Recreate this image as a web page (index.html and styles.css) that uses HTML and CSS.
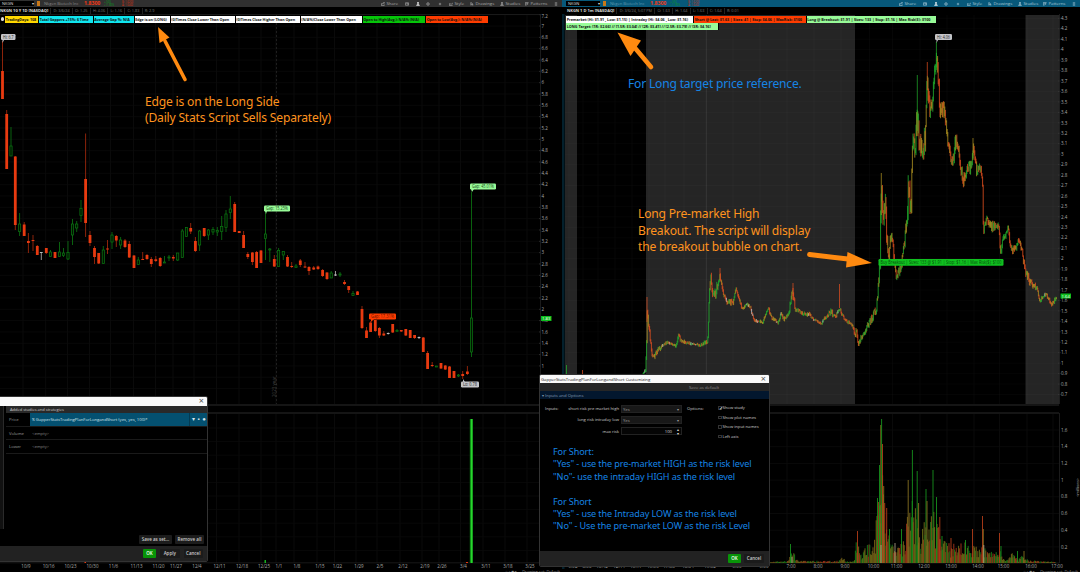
FILE: index.html
```
<!DOCTYPE html>
<html lang="en">
<head>
  <meta charset="UTF-8">
  <meta name="viewport" content="width=device-width, initial-scale=1.0">
  <title>NKGN - Gapper Stats Trading Plan</title>
  <link rel="stylesheet" href="styles.css">
</head>
<body>
  <!-- Toolbar icons -->
  <svg class="defs" width="0" height="0">
    <symbol id="i-share" viewBox="0 0 10 10"><path d="M1 3v6h7V6M3 6c0-3 2-4 5-4M6 0l3 2-3 2"/></symbol>
    <symbol id="i-note" viewBox="0 0 10 10"><path d="M1 2h8v6H1zM5 2v3h4"/></symbol>
    <symbol id="i-flask" viewBox="0 0 10 10"><path d="M3 1h4M4 1v4L1.5 9h7L6 5V1M3 7h4"/></symbol>
    <symbol id="i-gear" viewBox="0 0 10 10"><circle cx="5" cy="5" r="2.6"/><path d="M5 0v2M5 8v2M0 5h2M8 5h2"/></symbol>
    <symbol id="i-plus" viewBox="0 0 10 10"><path d="M5 2v6M2 5h6"/></symbol>
    <symbol id="i-style" viewBox="0 0 10 10"><path d="M1 3v6h8M3 6l2-2 2 2 2-4"/></symbol>
    <symbol id="i-cursor" viewBox="0 0 10 10"><path d="M2 1l6 5H5l2 3M2 1v7l3-2"/></symbol>
    <symbol id="i-pattern" viewBox="0 0 10 10"><path d="M1 9V1h8M3 4h5M3 8l2-2 3-1"/></symbol>
    <symbol id="i-list" viewBox="0 0 10 10"><path d="M2 2h6M2 5h6M2 8h6"/></symbol>
  </svg>

  <div class="workspace">
    <!-- Daily chart -->
    <section class="panel daily">
      <div class="toolbar">
        <span class="symbol-box">NKGN <i>▾</i></span>
        <span class="link-badge"></span>
        <span class="company">Nkgen Biotech Inc</span>
        <span class="last">1.8300</span>
        <span class="change up">+.560<br>+11.80%</span>
        <span class="change down">B: 1.6200<br>A: 1.6400</span>
        <div class="tools">
          <span class="tool w-share"><svg><use href="#i-share"/></svg>Share</span>
          <span class="tool w-icon"><svg><use href="#i-note"/></svg></span>
          <span class="tool w-icon flask"><svg><use href="#i-flask"/></svg></span>
          <span class="tool w-icon2"><svg><use href="#i-gear"/></svg></span>
          <span class="tool w-icon2"><svg><use href="#i-plus"/></svg></span>
          <span class="tool w-style"><svg><use href="#i-style"/></svg>Style</span>
          <span class="tool w-draw"><svg><use href="#i-cursor"/></svg>Drawings</span>
          <span class="tool w-studies"><svg><use href="#i-flask"/></svg>Studies</span>
          <span class="tool w-patterns"><svg><use href="#i-pattern"/></svg>Patterns</span>
          <span class="tool w-last"><svg><use href="#i-list"/></svg></span>
        </div>
      </div>
      <div class="quote">
        <b>NKGN 10 Y 1D [NASDAQ]</b>
        <span>D: 3/6/24</span><span>O: 1.25</span><span>H: 4.06</span><span>L: 1.16</span><span>C: 1.83</span><span>R: 2.9</span>
      </div>
      <svg class="chart" id="dailyChart" viewBox="0 14 562 555"></svg>
      <div class="status"><span>⌂ ▫ ◉ ▸</span><span>Drawing set: Default</span></div>
      <div class="labels">
        <span class="marker"></span>
        <span class="label yellow" style="width:34px">TradingDays: 108</span>
        <span class="label cyan" style="width:54.5px">Total Gappers +15%: 6 Time</span>
        <span class="label cyan" style="width:41px">Average Gap %: N/A</span>
        <span class="label white" style="width:36px">Edge is on (LONG)</span>
        <span class="label white" style="width:65px">(0)Times Close Lower Than Open</span>
        <span class="label white" style="width:65px">(0)Times Close Higher Than Open</span>
        <span class="label white" style="width:62px">(N/A%)Close Lower Than Open</span>
        <span class="label green" style="width:63.5px">Open to High(Avg.): N/A% (N/A)</span>
        <span class="label red" style="width:62.5px">Open to Low(Avg.): N/A% (N/A)</span>
      </div>
    </section>

    <!-- Intraday chart -->
    <section class="panel intraday">
      <div class="toolbar">
        <span class="symbol-box">NKGN <i>▾</i></span>
        <span class="link-badge"></span>
        <span class="company">Nkgen Biotech Inc</span>
        <span class="last">1.8300</span>
        <span class="change up">+.560<br>+11.80%</span>
        <span class="change down">B: 1.6200<br>A: 1.6400</span>
        <div class="tools">
          <span class="tool w-share"><svg><use href="#i-share"/></svg>Share</span>
          <span class="tool w-icon"><svg><use href="#i-note"/></svg></span>
          <span class="tool w-icon flask"><svg><use href="#i-flask"/></svg></span>
          <span class="tool w-icon2"><svg><use href="#i-gear"/></svg></span>
          <span class="tool w-icon2"><svg><use href="#i-plus"/></svg></span>
          <span class="tool w-style"><svg><use href="#i-style"/></svg>Style</span>
          <span class="tool w-draw"><svg><use href="#i-cursor"/></svg>Drawings</span>
          <span class="tool w-studies"><svg><use href="#i-flask"/></svg>Studies</span>
          <span class="tool w-patterns"><svg><use href="#i-pattern"/></svg>Patterns</span>
          <span class="tool w-last"><svg><use href="#i-list"/></svg></span>
        </div>
      </div>
      <div class="quote">
        <b>NKGN 1 D 1m [NASDAQ]</b>
        <span>D: 3/6/24, 5:07 PM</span><span>O: 1.63</span><span>H: 1.64</span><span>L: 1.63</span><span>C: 1.64</span><span>R: 0.01</span>
      </div>
      <svg class="chart" id="intradayChart" viewBox="562 14 518 555"></svg>
      <div class="status"><span>⌂ ▫ ◉ ▸</span><span>Drawing set: Default</span></div>
      <div class="labels">
        <span class="label white" style="width:128px">Premarket (Hi: $1.91 , Low: $1.15) | Intraday (Hi: $4.06 , Low: $1.16)</span>
        <span class="label red" style="width:112.5px">Short @ Last: $1.63 | Sizes: 41 | Stop: $4.06 | MaxRisk: $100</span>
        <span class="label lime" style="width:130.5px">Long @ Breakout: $1.91 | Sizes: 133 | Stop: $1.16 | Max Risk($): $100</span>
        <span class="label lime" style="width:153px">LONG Target: [1R: $2.66] // [1.5R: $3.04] // [2R: $3.41] // [2.5R: $3.79] // [3R: $4.16]</span>
      </div>
    </section>
  </div>

  <!-- Edit studies dialog -->
  <div class="dialog studies">
    <div class="dialog-title"><span></span><span class="close">×</span></div>
    <div class="studies-body">
      <div class="study-side"></div>
      <div class="study-list">
        <div class="study-head">Added studies and strategies</div>
        <div class="study-row selected"><span class="name">Price</span><span class="value">℁ GapperStatsTradingPlanForLongandShort (yes, yes, 100)*</span><span class="row-tools"><i>▾</i><i>▪</i><i>●</i></span></div>
        <div class="study-row"><span class="name">Volume</span><span class="value">&lt;empty&gt;</span></div>
        <div class="study-row"><span class="name">Lower</span><span class="value">&lt;empty&gt;</span></div>
        <div class="set-buttons"><button>Save as set...</button><button>Remove all</button></div>
      </div>
    </div>
    <div class="dialog-footer">
      <button class="ok">OK</button><button>Apply</button><button>Cancel</button>
    </div>
  </div>

  <!-- Customizing dialog -->
  <div class="dialog customizing">
    <div class="dialog-title"><span>GapperStatsTradingPlanForLongandShort Customizing</span><span class="close">×</span></div>
    <div class="default-bar"><span>Save as default</span></div>
    <div class="section-head">▾ Inputs and Options</div>
    <div class="inputs">
      <span class="group">Inputs:</span>
      <div class="fields">
        <label>short risk pre market high <span class="field">Yes<i>▾</i></span></label>
        <label>long risk intraday low <span class="field">Yes<i>▾</i></span></label>
        <label>max risk <span class="field number">100<i class="spin">▴<br>▾</i></span></label>
      </div>
      <span class="group options">Options:</span>
      <div class="checks">
        <span><i>✓</i>Show study</span>
        <span><i></i>Show plot names</span>
        <span><i></i>Show input names</span>
        <span><i></i>Left axis</span>
      </div>
    </div>
    <div class="help">
      <p>For Short:</p>
      <p>"Yes" - use the pre-market HIGH as the risk level</p>
      <p>"No"- use the intraday HIGH as the risk level</p>
      <p>&nbsp;</p>
      <p>For Short</p>
      <p>"Yes" - use the Intraday LOW as the risk level</p>
      <p>"No" - Use the pre-market LOW as the risk Level</p>
    </div>
    <div class="dialog-footer">
      <button class="ok">OK</button><button>Cancel</button>
    </div>
  </div>

  <!-- Callouts over the charts -->
  <div class="note note-edge">Edge is on the Long Side<br>(Daily Stats Script Sells Separately)</div>
  <div class="note note-target">For Long target price reference.</div>
  <div class="note note-breakout">Long Pre-market High<br>Breakout. The script will display<br>the breakout bubble on chart.</div>
  <svg class="arrows" viewBox="0 0 1080 572">
    <path class="shaft" stroke-width="3.6" d="M185 79.5L165 41"/>
    <path class="head" d="M158 27L169.5 37.5L159.5 43Z"/>
    <path class="shaft" stroke-width="4.6" d="M651 67L635 48"/>
    <path class="head" d="M617.5 32.5L641 40.5L630.5 56Z"/>
    <path class="shaft" stroke-width="4.8" d="M809.5 254.5L848 259"/>
    <path class="head" d="M847.5 252L872 263L846 267.5Z"/>
  </svg>

  <script src="chart.js"></script>
</body>
</html>
```
FILE: styles.css
```
* {
  box-sizing: border-box;
}

body {
  margin: 0;
  width: 1080px;
  height: 572px;
  position: relative;
  overflow: hidden;
  background-color: #000;
  color: #bbb;
  font-family: "Open Sans", "Noto Sans", sans-serif;
  font-size: 4.5px;
}

i {
  font-style: normal;
}

.defs {
  position: absolute;
}

.workspace {
  display: grid;
  grid-template-columns: 562px 518px;
  height: 572px;
}

.panel {
  display: flex;
  flex-direction: column;
  position: relative;
  min-width: 0;
  overflow: hidden;
}

/* Toolbar */
.toolbar {
  display: flex;
  align-items: center;
  height: 7px;
  flex: none;
  background-color: #303030;
  white-space: nowrap;
  line-height: 7px;
}

.intraday .toolbar {
  background-color: #07587a;
  padding-left: 4px;
}

.symbol-box {
  display: flex;
  justify-content: space-between;
  width: 34px;
  height: 5px;
  line-height: 5px;
  padding-left: 2px;
  background-color: #000;
  color: #ddd;
  font-size: 4px;
}

.link-badge {
  width: 3px;
  height: 5px;
  margin: 0 4px 0 3px;
  background-color: #c87818;
}

.company {
  width: 40px;
  color: #888;
  font-size: 4.1px;
}

.last {
  width: 20px;
  color: #f03818;
  font-size: 5.2px;
  font-weight: bold;
}

.change {
  width: 18px;
  font-size: 2.6px;
  line-height: 3px;
}

.up { color: #0a9c20; }
.down { color: #d83010; }

.intraday .company { color: #5f98b0; }

.tools {
  display: flex;
  margin-left: auto;
}

.tool {
  display: flex;
  align-items: center;
  gap: 1.5px;
  height: 7px;
  color: #aaa;
  font-size: 4.3px;
}

.intraday .tool { color: #a9c8d6; }

.tool svg {
  width: 4px;
  height: 4px;
  fill: none;
  stroke: currentColor;
  stroke-width: 1.6;
}

.w-share { width: 22px; }
.w-icon { width: 11px; padding-left: 2px; }
.w-icon2 { width: 12px; padding-left: 1px; }
.w-style { width: 21px; }
.w-draw { width: 30px; }
.w-studies { width: 25px; }
.w-patterns { width: 29px; }
.w-last { width: 8px; }
.tools .flask { color: #fff; }

/* Quote line */
.quote {
  display: flex;
  flex: none;
  align-items: center;
  height: 7px;
  padding-top: 1px;
  color: #777;
  font-size: 3.8px;
  line-height: 6px;
  white-space: nowrap;
}

.quote b {
  color: #ddd;
  font-size: 4px;
  padding-right: 2px;
}

.quote span {
  padding: 0 2.2px;
  border-left: 1px solid #222;
}

.intraday .quote { padding-left: 5px; }

.chart {
  display: block;
  width: 100%;
  height: 555px;
  flex: none;
}

.chart text {
  font-size: 4.5px;
  fill: #aaa;
}

.status {
  display: flex;
  justify-content: flex-end;
  gap: 5px;
  height: 3px;
  padding-right: 2px;
  overflow: hidden;
  line-height: 5px;
  color: #999;
  font-size: 4px;
}

/* Study labels over the chart */
.labels {
  position: absolute;
  top: 15.5px;
  left: 1px;
  right: 60px;
  display: flex;
  flex-wrap: wrap;
}

.intraday .labels {
  left: 4px;
  right: 140px;
  row-gap: 0.3px;
}

.marker {
  width: 3px;
  height: 4px;
  margin: 1px 1px 0 0;
  border-radius: 2px;
  background-color: #ddd;
}

.label {
  height: 7.3px;
  padding-left: 0.7px;
  border-right: 0.5px solid #000;
  overflow: hidden;
  color: #111;
  font-size: 3.75px;
  font-weight: bold;
  letter-spacing: -0.03px;
  line-height: 7px;
  white-space: nowrap;
}

.daily .label { font-size: 3.7px; letter-spacing: -0.05px; }

.yellow { background-color: #ffd800; }
.cyan { background-color: #10e5ee; }
.white { background-color: #fff; }
.green { background-color: #06c60a; }
.red { background-color: #ff3c00; }
.lime { background-color: #98fb98; }

/* Dialogs */
.dialog {
  position: absolute;
  display: flex;
  flex-direction: column;
  background-color: #000;
  border: 0.5px solid #333;
  border-radius: 2px;
  overflow: hidden;
}

.dialog-title {
  display: flex;
  flex: none;
  justify-content: space-between;
  align-items: center;
  height: 8.5px;
  padding: 0 3px 0 1px;
  background-color: #fafafa;
  color: #222;
  font-size: 4.3px;
}

.close {
  color: #555;
  font-size: 9px;
  line-height: 8px;
}

.dialog button {
  height: 9px;
  padding: 0;
  border: 0;
  border-radius: 1px;
  background-color: #1c1c1c;
  color: #ccc;
  font-family: inherit;
  font-size: 4.5px;
  font-weight: 600;
  line-height: 9px;
}

.dialog-footer {
  display: flex;
  flex: none;
  align-items: center;
  justify-content: flex-end;
  height: 15px;
  background-color: #222;
}

.dialog .dialog-footer button { background-color: #1b1b1b; }

.dialog .dialog-footer .ok {
  width: 13px;
  background-color: #089408;
  color: #fff;
}

.studies {
  left: -2px;
  top: 396px;
  width: 210px;
  height: 166px;
}

.studies-body {
  display: flex;
  flex: 1;
}

.study-side {
  width: 5px;
  margin: 0 2px 17px 0;
  background-color: #111;
  border-right: 1px solid #2a2a2a;
}

.study-list {
  display: flex;
  flex: 1;
  flex-direction: column;
}

.study-head {
  height: 7.5px;
  padding-left: 4px;
  background-color: #292929;
  color: #ccc;
  line-height: 7px;
  font-size: 4px;
}

.study-row {
  display: flex;
  align-items: center;
  height: 13.7px;
  padding-left: 3px;
  border-bottom: 1px solid #1a1a1a;
  font-size: 4.2px;
}

.name { width: 21px; color: #999; }

.value {
  flex: 1;
  height: 100%;
  padding-left: 2px;
  color: #888;
  line-height: 13px;
  white-space: nowrap;
}

.selected .value,
.selected .row-tools {
  background-color: #045070;
  color: #d5e5eb;
}

.row-tools {
  display: flex;
  justify-content: space-between;
  width: 18px;
  height: 100%;
  padding: 0 1px 0 2px;
  line-height: 13px;
  border-left: 1px solid #033a52;
  font-size: 6px;
}

.set-buttons {
  display: flex;
  gap: 3px;
  justify-content: flex-end;
  margin: auto 3px 2px 0;
}

.set-buttons button:first-child { width: 33px; }
.set-buttons button:last-child { width: 29px; }

.studies .dialog-footer {
  gap: 4px;
  padding-right: 4px;
}

.studies .dialog-footer button:not(.ok) { width: 19.5px; }

.customizing {
  left: 539px;
  top: 373.5px;
  width: 231px;
  height: 193px;
}

.default-bar {
  height: 8px;
  flex: none;
  padding-left: 149px;
  background-color: #262626;
  color: #888;
  line-height: 8px;
  font-size: 4.3px;
}

.section-head {
  flex: none;
  height: 8px;
  padding-left: 2px;
  background-color: #03172e;
  color: #8298ae;
  line-height: 8px;
  font-size: 4.3px;
}

.inputs {
  display: flex;
  flex: none;
  height: 49px;
  padding: 4px 0 0 5px;
  color: #ccc;
  font-size: 4.2px;
}

.group {
  width: 16px;
  padding-top: 3px;
}

.fields {
  width: 121px;
}

.fields label {
  display: flex;
  align-items: center;
  justify-content: flex-end;
  gap: 2px;
  height: 11.3px;
}

.field {
  display: flex;
  justify-content: space-between;
  width: 61px;
  height: 8px;
  padding: 0 2px 0 1px;
  border: 0.5px solid #222;
  background-color: #181818;
  color: #999;
  line-height: 7px;
}

.number {
  justify-content: flex-end;
  gap: 5px;
  background-color: #050505;
  color: #ddd;
}

.spin { font-size: 4px; line-height: 3.5px; }
.options { width: 36px; padding-left: 5px; }

.checks {
  display: flex;
  flex-direction: column;
}

.checks span {
  display: flex;
  align-items: center;
  height: 9.5px;
}

.checks i {
  width: 3.5px;
  height: 3.5px;
  margin-right: 1px;
  border: 0.5px solid #333;
  color: #fff;
  font-size: 5px;
  line-height: 3px;
}

.help {
  flex: 1;
  margin-top: -2px;
  padding-left: 13px;
  color: #1684e4;
  font-family: "Noto Sans", sans-serif;
  font-size: 9.1px;
  letter-spacing: -0.12px;
}

.help p {
  margin: 0;
  line-height: 12.4px;
  white-space: nowrap;
}

.customizing .dialog-footer {
  gap: 3px;
  padding-right: 5px;
}

.customizing .dialog-footer button:last-child { width: 20px; }

/* Callouts */
.note {
  position: absolute;
  color: #ff931e;
  font-family: "Noto Sans", sans-serif;
  font-size: 12.1px;
  letter-spacing: -0.2px;
  line-height: 16.6px;
  white-space: nowrap;
}

.note-edge { left: 145px; top: 93.5px; }
.note-target { left: 628px; top: 75.5px; color: #1684e4; }
.note-breakout { left: 638px; top: 206px; }

.arrows {
  position: absolute;
  inset: 0;
  width: 1080px;
  height: 572px;
}

.shaft {
  stroke: #ff8a10;
  stroke-linecap: round;
}

.head { fill: #ff8a10; }
```
FILE: chart.js
```
const SVG_NS = 'http://www.w3.org/2000/svg';
const daily = document.getElementById('dailyChart');
const intraday = document.getElementById('intradayChart');

function add(parent, name, attrs, text) {
  const el = document.createElementNS(SVG_NS, name);
  for (const key in attrs) el.setAttribute(key, attrs[key]);
  if (text !== undefined) el.textContent = text;
  parent.appendChild(el);
  return el;
}

function rect(parent, x, y, width, height, fill) {
  add(parent, 'rect', { x, y, width, height, fill });
}

function vline(parent, x, y1, y2, stroke, w) {
  add(parent, 'line', { x1: x, x2: x, y1, y2, stroke, 'stroke-width': w || 1 });
}

function hline(parent, x1, x2, y, stroke, w) {
  add(parent, 'line', { x1, x2, y1: y, y2: y, stroke, 'stroke-width': w || 1 });
}

function bubble(parent, x, y, w, h, fill, text, color, size) {
  add(parent, 'rect', { x, y, width: w, height: h, rx: 1.2, fill });
  add(parent, 'text', {
    x: x + 2, y: y + h / 2 + 1.6, textLength: w - 4, lengthAdjust: 'spacingAndGlyphs',
    style: `fill:${color};font-size:${size || 4.4}px`
  }, text);
}

// fixed seed so the bars look the same on every load
let seed = 7;
function rnd() {
  seed = (seed * 16807) % 2147483647;
  return seed / 2147483647;
}

/* ---------- Daily chart ---------- */
const weeks = [['10/9', 26], ['10/16', 48.7], ['10/23', 70.5], ['10/30', 92.5], ['11/6', 113.5],
  ['11/13', 136.5], ['11/20', 158.5], ['11/27', 176], ['12/4', 197], ['12/11', 219.5], ['12/18', 242],
  ['12/25', 264], ['1/1', 279], ['1/8', 297], ['1/15', 320], ['1/22', 337.5], ['1/29', 359], ['2/5', 380],
  ['2/12', 403], ['2/19', 425], ['2/26', 442], ['3/4', 463.5], ['3/11', 486], ['3/18', 508], ['3/25', 530]];

weeks.forEach(([name, x]) => {
  vline(daily, x - 3, 15, 404, '#0c0c0c', 0.8);
  vline(daily, x - 3, 414, 563, '#0c0c0c', 0.8);
  add(daily, 'text', { x, y: 568, 'text-anchor': 'middle' }, name);
});

for (let i = 0; i < 34; i++) {
  const y = 14.7 + i * 11.33;
  hline(daily, 0, 540, y, '#0c0c0c', 0.7);
  hline(daily, 539, 541, y, '#444', 0.6);
  if (i < 32) add(daily, 'text', { x: 541.5, y: y + (i ? 1.7 : 3) }, String(+(7.2 - i * 0.2).toFixed(1)));
}
for (let y = 428; y < 560; y += 13.6) hline(daily, 0, 540, y, '#0c0c0c', 0.7);

vline(daily, 540.5, 14, 404, '#222', 0.8);
vline(daily, 540.5, 413, 563, '#222', 0.8);
hline(daily, 0, 540, 14.5, '#222', 0.7);
hline(daily, 0, 540, 405, '#1c1c1c', 1.6);
hline(daily, 0, 540, 413, '#1c1c1c', 1.4);
hline(daily, 0, 540, 562.8, '#222', 0.7);
add(daily, 'line', { x1: 276.5, x2: 276.5, y1: 15, y2: 404, stroke: '#2a2a2a', 'stroke-width': 0.7, 'stroke-dasharray': '2 2' });
add(daily, 'text', { x: 0, y: 0, transform: 'translate(275.5 397) rotate(-90)', style: 'fill:#444' }, '2023 year');

// x, high, open/close top, open/close bottom, low, colour (r, g or w)
const candles = [
  [2.5, 41, 71, 99, 99, 'r'], [6.7, 110, 114, 169, 169, 'r'], [11, 127, 146, 156, 156, 'g'],
  [15.3, 156, 156.5, 225, 230, 'r'], [19.6, 213, 224, 231.5, 236, 'g'], [24.2, 222, 224.5, 236, 236, 'r'],
  [28.4, 233, 241, 243, 253, 'r'], [33, 235, 240, 241, 251, 'r'], [37.3, 245, 246, 255, 255, 'r'],
  [41.3, 252, 252, 253, 260, 'w'], [46.3, 248, 248, 253, 254, 'r'], [50.5, 250, 252, 256.5, 257, 'g'],
  [55, 252, 252, 258, 258, 'r'], [59.5, 242, 252, 256.5, 257, 'g'], [63.5, 248, 253, 255.5, 257, 'g'],
  [68, 241, 252.5, 259, 260, 'g'], [72.5, 219, 224, 235, 245, 'g'], [76.7, 221, 224, 228, 232, 'g'],
  [81, 200, 208.5, 215.5, 222, 'g'], [85.6, 133.5, 179, 223, 237, 'r'], [90, 231, 235, 243, 246, 'r'],
  [94.5, 246, 248, 257, 264, 'r'], [98.7, 253, 253, 263.5, 264, 'r'], [103.3, 246, 250, 263.5, 264, 'g'],
  [107.5, 240, 248.5, 249.5, 254, 'r'], [112, 232, 235, 242, 249, 'g'], [116.3, 235, 236, 240.5, 247, 'r'],
  [120.6, 237, 240, 245, 249, 'g'], [125, 239, 240.5, 247, 248, 'r'], [129.3, 241, 244, 257.5, 258, 'r'],
  [134, 255, 255.5, 268, 268, 'r'], [138.3, 257, 260, 264.5, 265, 'g'], [142.7, 252, 259, 260, 260, 'r'],
  [147, 254, 255, 259, 260, 'r'], [151.3, 257, 259, 264, 267, 'r'], [155.8, 256, 259.3, 261, 262, 'r'],
  [160.2, 257, 258, 266, 267, 'r'], [164.5, 256, 262, 263, 263, 'g'], [169, 255, 257, 258, 261, 'g'],
  [173.3, 255, 257, 258.5, 261, 'r'], [177.7, 253, 253, 260, 261, 'g'], [182.3, 229, 231, 257.5, 258, 'g'],
  [186.5, 227, 227.5, 236.5, 237, 'g'], [190.7, 223, 228, 231.5, 234, 'r'], [195.4, 237, 241, 251, 252, 'r'],
  [199.6, 230, 231, 245, 251, 'g'], [204.2, 228, 228, 236, 237, 'r'], [208.4, 229, 230, 235, 240, 'g'],
  [213, 227, 229.5, 232, 235, 'g'], [217.3, 227, 230.5, 232, 236, 'g'], [221.7, 216, 226.5, 231.5, 240, 'g'],
  [226, 210, 214, 227.5, 232, 'g'], [230.3, 196, 209, 212.5, 219, 'g'], [234.7, 202, 204, 232, 232, 'r'],
  [239.2, 231, 231, 233, 233, 'r'], [243.6, 231, 235, 248, 248, 'r'], [247.8, 252, 254, 257, 259, 'r'],
  [252.4, 252, 252.5, 262, 265, 'r'], [256.6, 251, 252, 268, 268, 'r'], [261, 250, 250.5, 263, 263, 'r'],
  [265.5, 213, 234, 238.5, 260, 'g'], [269.8, 248, 249, 250, 262, 'g'], [274.3, 255, 259, 266.5, 267, 'r'],
  [278.6, 248, 250.5, 266.5, 267, 'g'], [283.3, 251, 251.5, 255, 260, 'g'], [287.5, 255, 257, 266.5, 267, 'r'],
  [291.7, 262, 266, 267, 268, 'r'], [296, 264, 266, 267.5, 268, 'g'], [300.3, 259, 260.5, 265, 267, 'r'],
  [305, 262, 266.5, 267.5, 268, 'r'], [309, 266, 267, 271, 275, 'r'], [313.7, 266, 267.5, 269.5, 270, 'r'],
  [318, 265.5, 266.5, 269, 270, 'r'], [322.6, 269, 270, 276, 277, 'r'], [327, 272, 272.5, 279, 280, 'r'],
  [331.2, 271, 273, 278, 278, 'g'], [335.5, 271, 274.5, 275.5, 276, 'w'], [340, 272, 274, 275, 277, 'g'],
  [344.5, 280, 282, 284, 285, 'r'], [348.7, 286, 286, 290, 293, 'r'], [353, 291, 293.5, 295.5, 296, 'g'],
  [357.5, 291, 291.5, 295, 295, 'r'], [362, 306, 309, 328, 329, 'r'], [366.5, 327, 330.5, 338, 338, 'r'],
  [370.6, 321, 322.5, 332, 332, 'r'], [375.3, 320, 320, 331, 332, 'r'], [379.4, 327, 328, 335.5, 338, 'r'],
  [383.8, 331, 333.5, 335.5, 336, 'r'], [388.2, 332.5, 333, 334, 334.5, 'w'], [392.7, 324, 324, 332.5, 333, 'r'],
  [397, 329, 330.5, 331.5, 332, 'g'], [401.3, 330, 330, 331.5, 332, 'r'], [405.8, 329, 329, 335.5, 336, 'r'],
  [410.2, 330, 330, 338, 338, 'r'], [414.6, 335, 335, 338, 339, 'r'], [419, 336.5, 337, 338, 339, 'w'],
  [423.3, 337, 337.5, 352, 352, 'r'], [427.6, 351, 353, 369, 369, 'r'], [432.2, 362, 365, 366, 367, 'r'],
  [436.5, 366, 366, 367, 367, 'g'], [441, 363, 363, 368.5, 369, 'r'], [445.3, 365, 365.5, 369.5, 370, 'r'],
  [449.5, 366, 366.5, 378, 378, 'r'], [454, 371, 371, 378, 378, 'r'], [458.5, 374, 375, 376, 377, 'g'],
  [462.7, 371, 374, 376, 379, 'r'], [467.4, 366, 371.5, 374, 375, 'r'], [471.5, 192, 318, 352, 357, 'g']
];

candles.forEach(([x, high, top, bottom, low, c]) => {
  const color = { r: '#e83a10', g: '#0b7a12', w: '#bbb' }[c];
  const h = Math.max(1, bottom - top);
  if (c === 'g') {
    vline(daily, x, high, top, color, 0.8);
    vline(daily, x, bottom, low, color, 0.8);
    add(daily, 'rect', { x: x - 1.1, y: top, width: 2.2, height: h, fill: '#001400', stroke: color, 'stroke-width': 0.7 });
  } else {
    vline(daily, x, high, low, c === 'r' ? '#b02c0c' : color, 0.8);
    rect(daily, x - 1.4, top, 2.8, h, color);
  }
});

bubble(daily, 1, 34, 14.5, 6, '#c4c4c8', 'Hi: 6.7', '#222');
bubble(daily, 264, 205.5, 26, 6, '#98fb98', 'Gap: 15.25%', '#164a16');
bubble(daily, 470, 183.5, 26, 6, '#98fb98', 'Gap: 45.01%', '#164a16');
bubble(daily, 369, 313.5, 27, 6, '#ff3c00', 'Gap: 17.31%', '#6a1400');
bubble(daily, 461, 381.5, 18, 6, '#c4c4c8', 'Lo: 0.78', '#222');
add(daily, 'path', { d: 'M471 189l1 3 2-3zM265 211l1 3 1-3z', fill: '#98fb98' });
add(daily, 'path', { d: 'M371 322l0-3 3 0z', fill: '#ff3c00' });
add(daily, 'path', { d: 'M2.5 39l0 4 2-4zM463 382l0-3 2 3z', fill: '#c4c4c8' });
rect(daily, 541, 316, 10.5, 5, '#0dbd1d');
add(daily, 'text', { x: 542, y: 320.2, style: 'fill:#fff;font-size:4.2px' }, '1.83');

rect(daily, 469.8, 419, 3.2, 144, '#0a7a12');
rect(daily, 470.8, 419, 1.6, 144, '#28d52e');
rect(daily, 84.5, 560, 1.5, 3, '#e83a10');
rect(daily, 264.5, 560, 1.5, 3, '#18b020');
rect(daily, 466, 562, 2, 1, '#e83a10');

/* ---------- Intraday chart ---------- */
rect(intraday, 562, 14, 2.5, 555, '#03202c');
rect(intraday, 565, 15, 12, 389, '#252525');
rect(intraday, 646, 15, 209, 389, '#252525');
rect(intraday, 1025.5, 15, 34, 389, '#252525');

const hours = [['6:52', 573], ['8:53', 587], ['10:42', 602], ['12:44', 619], ['15:17', 636], ['16:50', 653],
  ['17:08', 669], ['18:04', 688], ['19:02', 710], ['5:00', 737], ['6:00', 764], ['7:00', 791], ['8:00', 818],
  ['9:00', 845], ['10:00', 873.5], ['11:00', 896.5], ['12:00', 924], ['13:00', 951], ['14:00', 978],
  ['15:00', 1003.5], ['16:00', 1031], ['17:00', 1057]];
hours.forEach(([name, x]) => {
  vline(intraday, x - 4, 15, 404, 'rgba(255,255,255,.03)', 0.8);
  vline(intraday, x - 4, 414, 563, '#0c0c0c', 0.8);
  add(intraday, 'text', { x, y: 568, 'text-anchor': 'middle' }, name);
});
vline(intraday, 706.5, 15, 404, 'rgba(255,255,255,.08)', 0.8);

for (let i = 0; i < 37; i++) {
  const y = 18.3 + i * 10.45;
  hline(intraday, 565, 1059, y, 'rgba(255,255,255,.03)', 0.7);
  hline(intraday, 1058.5, 1060.5, y, '#555', 0.6);
  add(intraday, 'text', { x: 1061, y: y + 1.7 }, String(+(4.3 - i * 0.1).toFixed(1)));
}
for (let i = 0; i < 8; i++) {
  const y = 430 + i * 16.7;
  hline(intraday, 565, 1059, y, '#0d0d0d', 0.7);
  add(intraday, 'text', { x: 1061, y: y + 1.6 }, String(+(1.6 - i * 0.2).toFixed(1)));
}
add(intraday, 'text', { x: 0, y: 0, transform: 'translate(1078.5 497) rotate(-90)', style: 'font-size:4px' }, '<millions>');

vline(intraday, 1059.5, 9, 404, '#222', 0.8);
vline(intraday, 1059.5, 413, 563, '#222', 0.8);
hline(intraday, 565, 1059, 405, '#1c1c1c', 1.6);
hline(intraday, 565, 1059, 413, '#1c1c1c', 1.4);
hline(intraday, 565, 1059, 563, '#222', 0.7);

// x, price position, noise
const path = [
  [643, 374, 1], [645.5, 368, 3], [646.5, 345, 4], [647, 312, 8], [648.5, 322, 6], [650, 336, 4], [652, 355, 3], [654, 356, 3],
  [657, 351, 4], [660, 348, 3], [664, 343, 2], [668, 342, 2], [676, 346, 1.5], [678.5, 334, 3], [681, 341, 2],
  [690, 343, 1.5], [700, 345, 1.5], [706, 341, 4], [707.5, 344, 3], [708.5, 320, 3], [709.5, 290, 5], [710.5, 275, 6],
  [713, 295, 6], [716, 292, 6], [719.5, 276, 6], [721, 282, 4], [724, 295, 3], [727, 304, 2], [730, 301, 4], [733, 302, 3],
  [736, 288, 2], [739, 298, 2], [742, 309, 2], [747, 304, 2], [750, 306, 2], [754, 320, 2], [763, 322, 1.5],
  [768, 307, 3], [772, 318, 2], [778, 322, 2], [781, 314, 2], [784, 319, 2], [789, 314, 3], [791, 298, 5], [793, 290, 6],
  [795, 309, 3], [802, 313, 3], [808, 313, 3], [814, 319, 2], [821, 323, 1.5], [826, 317, 3], [831, 311, 4],
  [835, 317, 3], [840, 309, 2], [844, 319, 2], [852, 324, 2], [855, 335, 3], [856.5, 326, 6], [858, 344, 3], [861, 338, 4],
  [865, 330, 4], [870, 322, 5], [873, 315, 6], [876, 311, 4], [878, 290, 8], [880, 260, 12], [881, 200, 15],
  [882, 185, 15], [883, 215, 18], [885, 200, 15], [887, 238, 12], [889, 255, 10], [890, 234, 8], [892, 240, 6],
  [894, 255, 8], [896, 277, 5], [898, 272, 5], [901, 267, 6], [903, 252, 6], [905, 238, 10], [907, 222, 12],
  [908.5, 185, 18], [911, 215, 14], [912.5, 145, 18], [915, 148, 15], [917, 115, 22], [919, 135, 15], [922, 150, 14],
  [925, 140, 16], [927, 88, 18], [929, 108, 18], [932, 110, 15], [934, 75, 18], [936, 58, 16], [938, 74, 14],
  [940, 105, 16], [942, 112, 14], [944, 108, 14], [946, 125, 8], [949, 146, 9], [951, 165, 8], [953, 158, 12],
  [956, 136, 10], [959, 154, 7], [963, 182, 8], [967, 168, 6], [971, 168, 8], [973, 148, 10], [977, 172, 7],
  [981, 169, 6], [982.5, 175, 6], [983.3, 232, 5], [987, 219, 6], [991, 228, 8], [995, 226, 6], [999, 225, 4],
  [1000.5, 255, 5], [1003, 238, 5], [1008, 230, 5], [1011, 248, 5], [1015, 249, 5], [1019, 240, 4], [1022, 250, 5],
  [1025, 270, 5], [1030, 282, 5], [1037, 288, 3], [1039.5, 300, 3], [1046, 294, 2], [1052, 304, 3], [1057, 297, 3]
];

const tickColors = ['#22b42e', '#b39622', '#e8501f'];
let prev = path[0][1];
for (let i = 0, x = path[0][0]; x < 1057; x += 0.6) {
  while (path[i + 1][0] < x) i++;
  const [x0, y0, n0] = path[i];
  const [x1, y1, n1] = path[i + 1];
  const t = (x - x0) / (x1 - x0);
  const noise = n0 + (n1 - n0) * t;
  const mid = y0 + (y1 - y0) * t + (rnd() - 0.5) * noise * 1.3;
  let color = mid < prev ? tickColors[0] : tickColors[2];
  if (rnd() < 0.3) color = tickColors[1];
  if (noise < 3 && rnd() < 0.08) color = '#c8c8c8';
  vline(intraday, x, Math.min(prev, mid) - rnd() * noise * 0.5, Math.max(prev, mid) + rnd() * noise * 0.5 + 0.6, color, 0.8);
  prev = mid;
}

// single long wicks
[[647, 297, 322, 2], [839.5, 284, 308, 2], [793, 283, 300, 2], [881.3, 173, 215, 1], [917.3, 75, 120, 0],
  [927.3, 62, 90, 2], [936.4, 42, 70, 0], [973, 138, 160, 1], [566.5, 365, 374, 0], [582.5, 370, 374, 2],
  [720, 268, 280, 2]
].forEach(([x, y1, y2, c]) => vline(intraday, x, y1, y2, tickColors[c], 0.7));

// volume envelope: x, height
const volume = [[769, 1], [787, 2], [790, 9], [794, 9], [798, 2], [838, 2], [842, 6], [848, 1], [854, 3], [857, 24],
  [860, 7], [868, 18], [874, 13], [877, 50], [880, 100], [882, 110], [885, 55], [888, 30], [893, 15], [898, 15],
  [904, 22], [908, 45], [912, 55], [917, 50], [920, 25], [925, 38], [929, 32], [933, 50], [937, 45], [941, 24], [948, 17],
  [955, 19], [965, 18], [975, 15], [982, 16], [990, 10], [1000, 12], [1004, 4], [1012, 10], [1018, 3], [1025, 9], [1028, 3],
  [1040, 2], [1057, 1]];
for (let i = 0, x = 769; x < 1056; x += 0.8) {
  while (volume[i + 1][0] < x) i++;
  const t = (x - volume[i][0]) / (volume[i + 1][0] - volume[i][0]);
  const env = volume[i][1] + (volume[i + 1][1] - volume[i][1]) * t;
  const h = env * (0.3 + rnd() * 0.85);
  vline(intraday, x, 563 - h, 563, ['#157f1a', '#7e641a', '#a8361c', '#6f6f18'][Math.floor(rnd() * 4)], 0.9);
}
[[790.5, 19, 0], [857.5, 32, 2], [877.5, 65, 0], [879.5, 98, 0], [880.8, 138, 1], [881.6, 144, 0], [882.5, 119, 2],
  [883.7, 77, 1], [884.7, 60, 2], [886.7, 55, 2], [889.5, 34, 0], [901.5, 34, 0], [908.2, 83, 1], [912.4, 113, 0], [917.2, 92, 0],
  [918.6, 60, 1], [926, 74, 0], [927, 62, 1], [933, 93, 0], [936.5, 66, 0], [939.8, 46, 2], [942, 27, 0], [951, 25, 2],
  [965.5, 23, 0], [972.5, 34, 2], [982.5, 47, 2], [983.3, 34, 1], [999.5, 30, 2], [1001, 17, 0], [1017.5, 12, 0], [1024, 12, 1]
].forEach(([x, h, c]) => vline(intraday, x, 563 - h, 563, ['#16911d', '#877020', '#b23c18'][c], 0.9));
[[895, 20], [983.8, 18], [792, 6], [881, 18]].forEach(([x, h]) => vline(intraday, x, 563 - h, 563, '#b8a890', 0.8));

bubble(intraday, 935, 34, 17, 6, '#c4c4c8', 'Hi: 4.06', '#222');
add(intraday, 'path', { d: 'M936.5 39l0 4 2-4z', fill: '#c4c4c8' });
bubble(intraday, 878.5, 259, 125, 6.8, '#10c020', 'Buy Breakout | Sizes: 133 @ $1.91 | Stop: $1.16 | Max Risk($): $100', '#064d0b');
rect(intraday, 1060.5, 293.5, 10.5, 5, '#0dbd1d');
add(intraday, 'text', { x: 1061.5, y: 297.7, style: 'fill:#fff;font-size:4.2px' }, '1.64');
```
